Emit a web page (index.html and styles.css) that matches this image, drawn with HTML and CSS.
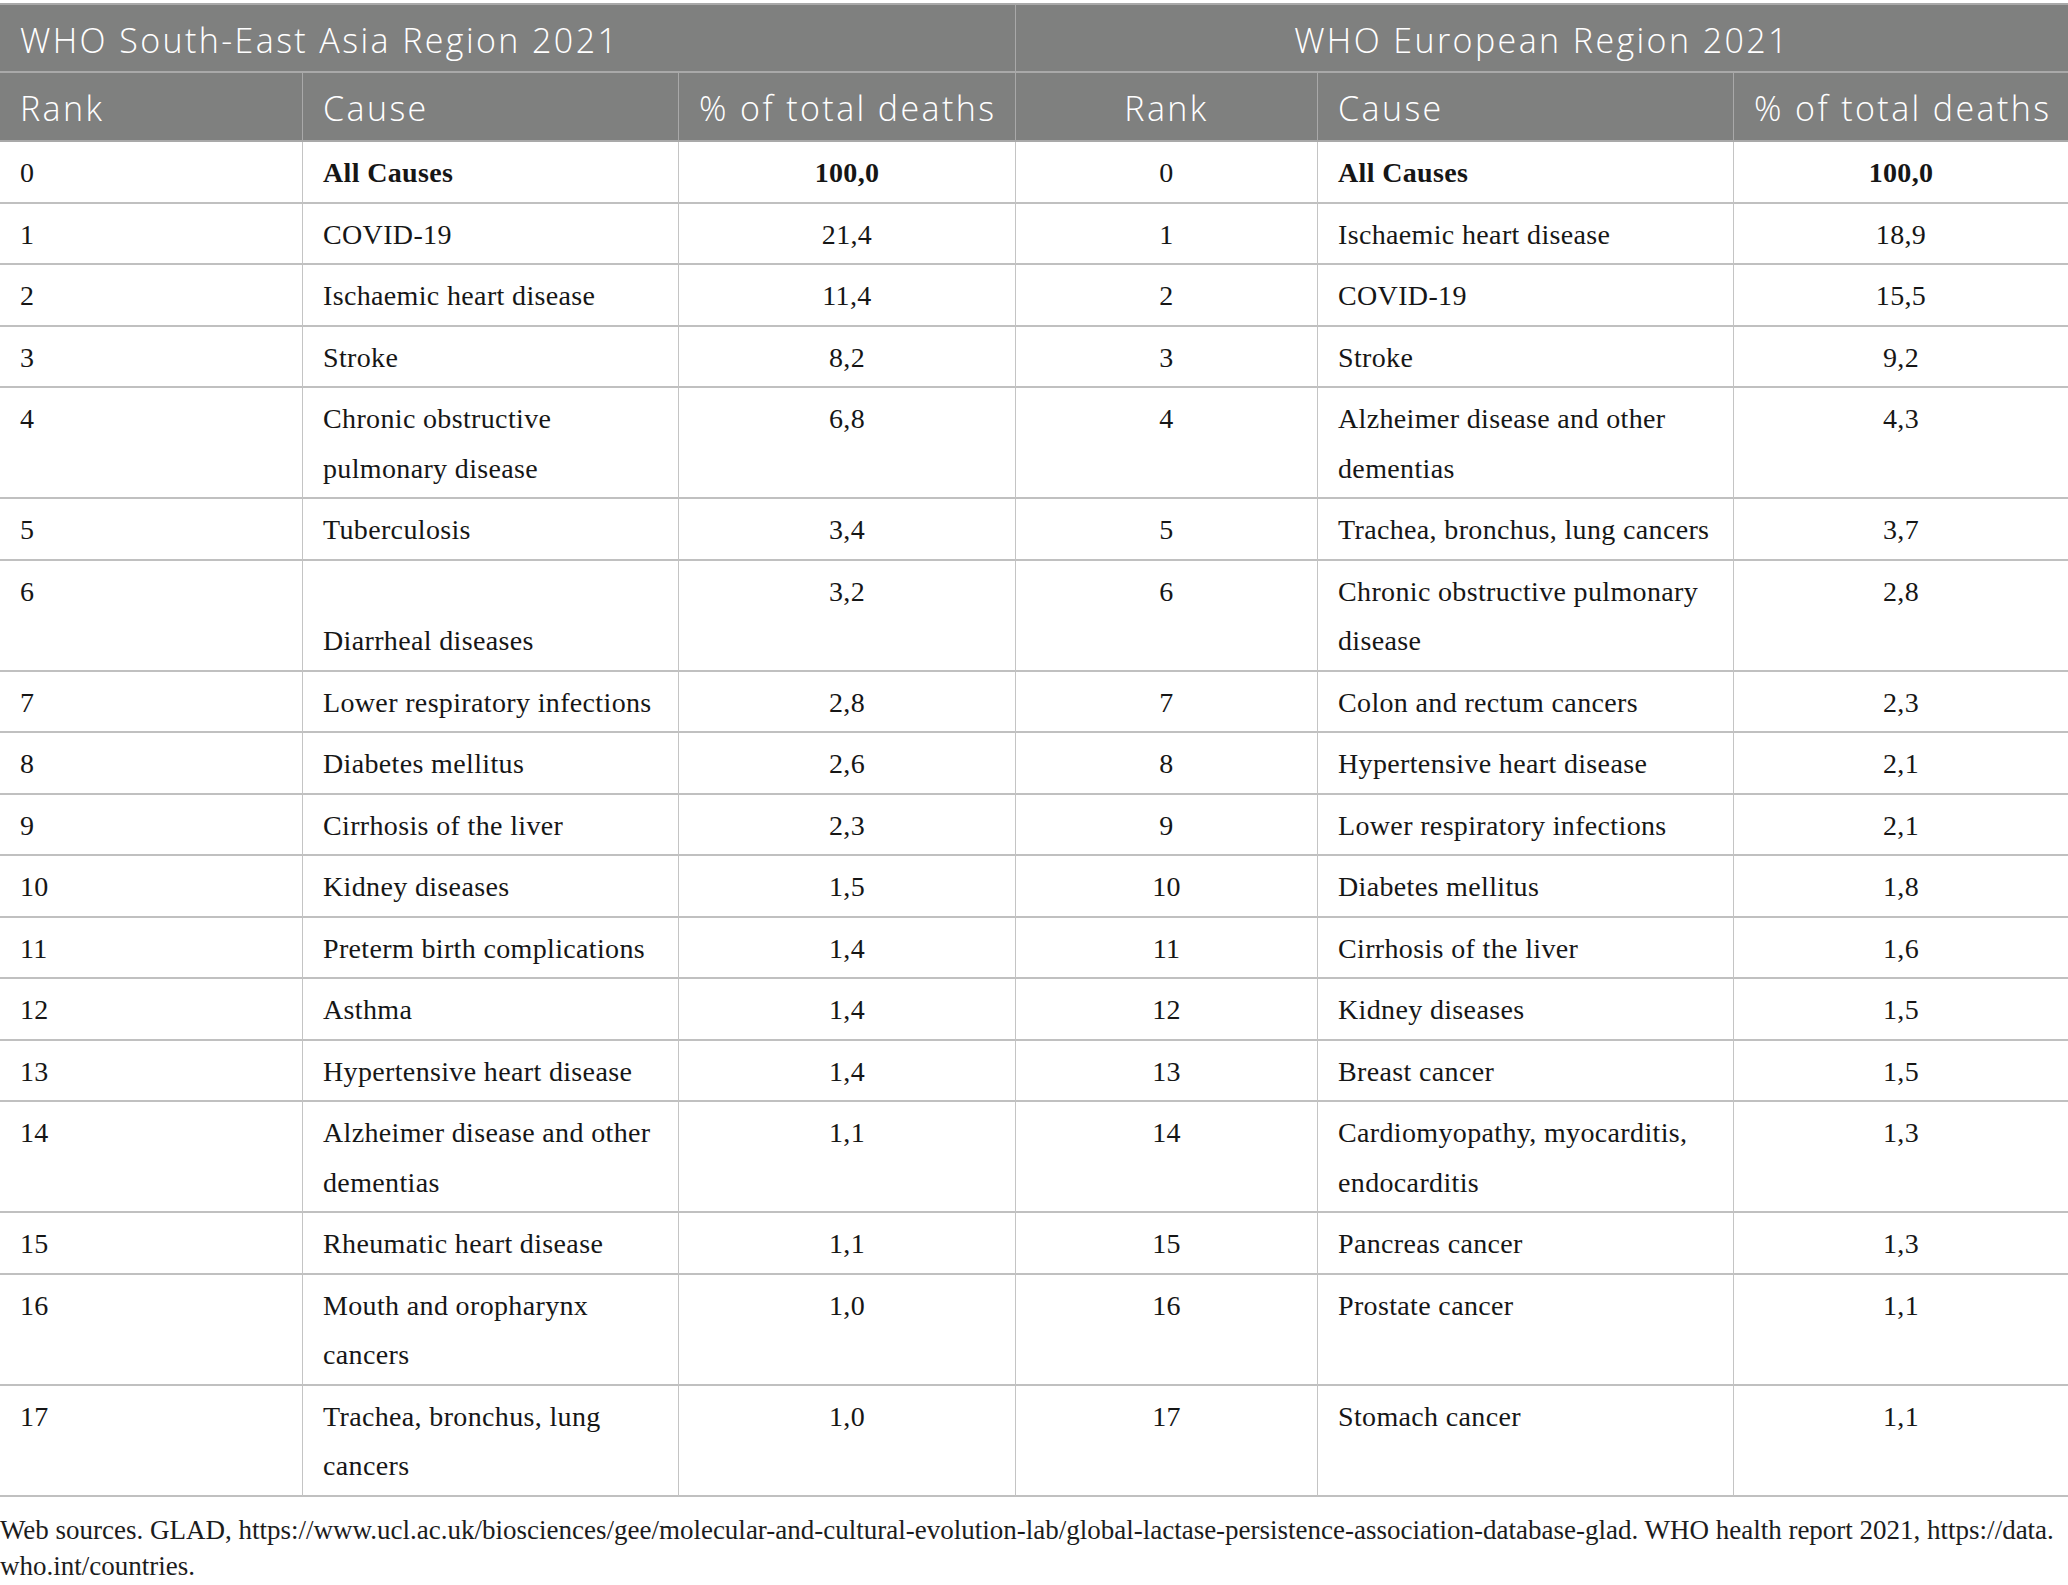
FILE: index.html
```html
<!DOCTYPE html>
<html lang="en">
<head>
<meta charset="utf-8">
<title>WHO leading causes of death 2021</title>
<link rel="stylesheet" href="styles.css">
</head>
<body>
<table class="deaths">
  <colgroup>
    <col class="c-rank-l"><col class="c-cause-l"><col class="c-pct-l">
    <col class="c-rank-r"><col class="c-cause-r"><col class="c-pct-r">
  </colgroup>
  <thead>
    <tr class="title-row">
      <th colspan="3" class="title title-left">WHO South-East Asia Region 2021</th>
      <th colspan="3" class="title title-right last">WHO European Region 2021</th>
    </tr>
    <tr class="head-row">
      <th class="h-left">Rank</th>
      <th class="h-left">Cause</th>
      <th class="h-center">% of total deaths</th>
      <th class="h-center">Rank</th>
      <th class="h-left">Cause</th>
      <th class="h-center last">% of total deaths</th>
    </tr>
  </thead>
  <tbody>
    <tr class="total">
      <td class="rank-l">0</td><td class="cause strong">All Causes</td><td class="pct strong">100,0</td>
      <td class="rank-r">0</td><td class="cause strong">All Causes</td><td class="pct strong last">100,0</td>
    </tr>
    <tr>
      <td class="rank-l">1</td><td class="cause">COVID-19</td><td class="pct">21,4</td>
      <td class="rank-r">1</td><td class="cause">Ischaemic heart disease</td><td class="pct last">18,9</td>
    </tr>
    <tr>
      <td class="rank-l">2</td><td class="cause">Ischaemic heart disease</td><td class="pct">11,4</td>
      <td class="rank-r">2</td><td class="cause">COVID-19</td><td class="pct last">15,5</td>
    </tr>
    <tr>
      <td class="rank-l">3</td><td class="cause">Stroke</td><td class="pct">8,2</td>
      <td class="rank-r">3</td><td class="cause">Stroke</td><td class="pct last">9,2</td>
    </tr>
    <tr>
      <td class="rank-l">4</td><td class="cause">Chronic obstructive<br>pulmonary disease</td><td class="pct">6,8</td>
      <td class="rank-r">4</td><td class="cause">Alzheimer disease and other<br>dementias</td><td class="pct last">4,3</td>
    </tr>
    <tr>
      <td class="rank-l">5</td><td class="cause">Tuberculosis</td><td class="pct">3,4</td>
      <td class="rank-r">5</td><td class="cause">Trachea, bronchus, lung cancers</td><td class="pct last">3,7</td>
    </tr>
    <tr>
      <td class="rank-l">6</td><td class="cause"><br>Diarrheal diseases</td><td class="pct">3,2</td>
      <td class="rank-r">6</td><td class="cause">Chronic obstructive pulmonary<br>disease</td><td class="pct last">2,8</td>
    </tr>
    <tr>
      <td class="rank-l">7</td><td class="cause">Lower respiratory infections</td><td class="pct">2,8</td>
      <td class="rank-r">7</td><td class="cause">Colon and rectum cancers</td><td class="pct last">2,3</td>
    </tr>
    <tr>
      <td class="rank-l">8</td><td class="cause">Diabetes mellitus</td><td class="pct">2,6</td>
      <td class="rank-r">8</td><td class="cause">Hypertensive heart disease</td><td class="pct last">2,1</td>
    </tr>
    <tr>
      <td class="rank-l">9</td><td class="cause">Cirrhosis of the liver</td><td class="pct">2,3</td>
      <td class="rank-r">9</td><td class="cause">Lower respiratory infections</td><td class="pct last">2,1</td>
    </tr>
    <tr>
      <td class="rank-l">10</td><td class="cause">Kidney diseases</td><td class="pct">1,5</td>
      <td class="rank-r">10</td><td class="cause">Diabetes mellitus</td><td class="pct last">1,8</td>
    </tr>
    <tr>
      <td class="rank-l">11</td><td class="cause">Preterm birth complications</td><td class="pct">1,4</td>
      <td class="rank-r">11</td><td class="cause">Cirrhosis of the liver</td><td class="pct last">1,6</td>
    </tr>
    <tr>
      <td class="rank-l">12</td><td class="cause">Asthma</td><td class="pct">1,4</td>
      <td class="rank-r">12</td><td class="cause">Kidney diseases</td><td class="pct last">1,5</td>
    </tr>
    <tr>
      <td class="rank-l">13</td><td class="cause">Hypertensive heart disease</td><td class="pct">1,4</td>
      <td class="rank-r">13</td><td class="cause">Breast cancer</td><td class="pct last">1,5</td>
    </tr>
    <tr>
      <td class="rank-l">14</td><td class="cause">Alzheimer disease and other<br>dementias</td><td class="pct">1,1</td>
      <td class="rank-r">14</td><td class="cause">Cardiomyopathy, myocarditis,<br>endocarditis</td><td class="pct last">1,3</td>
    </tr>
    <tr>
      <td class="rank-l">15</td><td class="cause">Rheumatic heart disease</td><td class="pct">1,1</td>
      <td class="rank-r">15</td><td class="cause">Pancreas cancer</td><td class="pct last">1,3</td>
    </tr>
    <tr>
      <td class="rank-l">16</td><td class="cause">Mouth and oropharynx<br>cancers</td><td class="pct">1,0</td>
      <td class="rank-r">16</td><td class="cause">Prostate cancer</td><td class="pct last">1,1</td>
    </tr>
    <tr>
      <td class="rank-l">17</td><td class="cause">Trachea, bronchus, lung<br>cancers</td><td class="pct">1,0</td>
      <td class="rank-r">17</td><td class="cause">Stomach cancer</td><td class="pct last">1,1</td>
    </tr>
  </tbody>
</table>
<p class="note">
  <span class="note-line">Web sources. GLAD, https://www.ucl.ac.uk/biosciences/gee/molecular-and-cultural-evolution-lab/global-lactase-persistence-association-database-glad. WHO health report 2021, https://data.</span>
  <span class="note-line">who.int/countries.</span>
</p>
</body>
</html>
```
FILE: styles.css
```css
html, body {
  margin: 0;
  padding: 0;
  background: #ffffff;
}

body {
  width: 2068px;
  font-family: "Liberation Serif", "Times New Roman", serif;
  color: #161616;
}

.deaths {
  margin-top: 3px;
  width: 2068px;
  table-layout: fixed;
  border-collapse: separate;
  border-spacing: 0;
  border-top: 2px solid #a9a9a9;
}

.c-rank-l { width: 303px; }
.c-cause-l { width: 376px; }
.c-pct-l { width: 337px; }
.c-rank-r { width: 302px; }
.c-cause-r { width: 416px; }
.c-pct-r { width: 334px; }

.deaths th {
  background: #7f807f;
  color: #ffffff;
  font-family: "Open Sans", "Noto Sans", sans-serif;
  font-weight: 300;
  font-size: 34px;
  letter-spacing: 2.4px;
  line-height: 40px;
  vertical-align: top;
  border-right: 1px solid #a9a9a9;
  border-bottom: 2px solid #a9a9a9;
  padding: 0 20px;
  white-space: nowrap;
}

.deaths th.last,
.deaths td.last {
  border-right: none;
}

.title-row th {
  box-sizing: border-box;
  height: 68px;
  padding-top: 15px;
  padding-bottom: 0;
}

.title-left { text-align: left; }
.title-right { text-align: center; }

.head-row th {
  padding-top: 15px;
  padding-bottom: 12px;
}

.h-left { text-align: left; }
.h-center { text-align: center; }

.deaths td {
  font-size: 28px;
  letter-spacing: 0.35px;
  line-height: 49.5px;
  padding: 6px 20px 4px 20px;
  vertical-align: top;
  white-space: nowrap;
  border-right: 1px solid #c4c4c4;
  border-bottom: 2px solid #c0c0c0;
}

.rank-l { text-align: left; }
.rank-r { text-align: center; }
.cause { text-align: left; }
.pct { text-align: center; }

.deaths td.strong {
  font-weight: 700;
}

.note {
  margin: 15px 0 0 0;
  font-size: 27px;
  line-height: 36px;
  color: #1c1c1c;
}

.note-line {
  display: block;
  white-space: nowrap;
}
```
